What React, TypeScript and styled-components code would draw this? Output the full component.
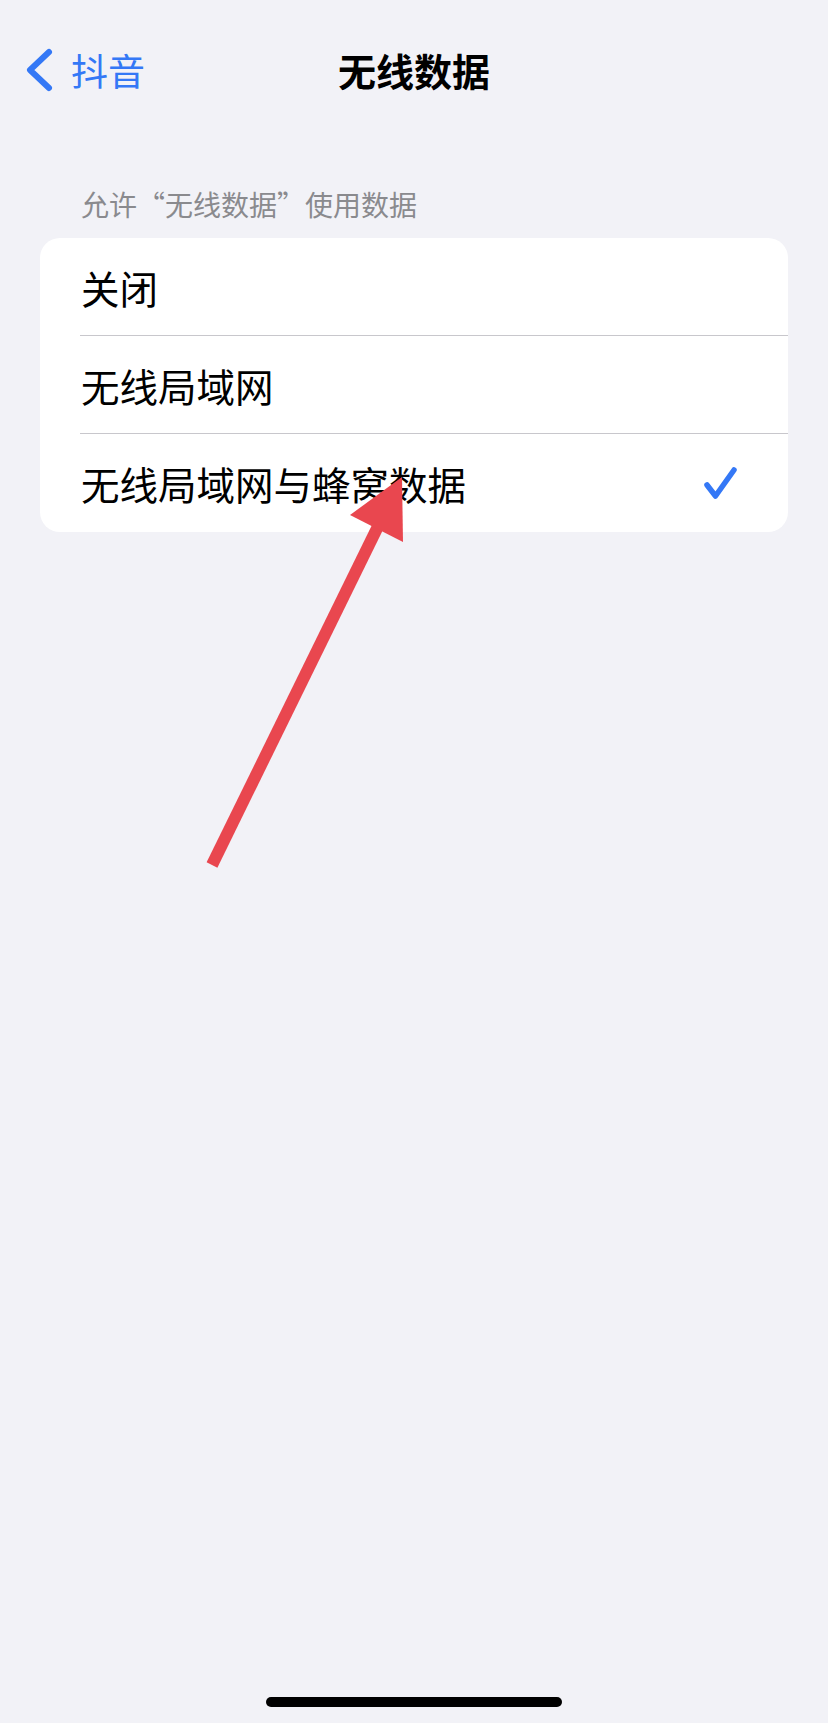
import React from "react";
import styled, { createGlobalStyle } from "styled-components";

const GlobalStyle = createGlobalStyle`
  html, body {
    margin: 0;
    padding: 0;
    background: #f2f2f7;
  }
  body {
    font-family: "Noto Sans CJK SC", "Noto Sans", sans-serif;
    -webkit-font-smoothing: antialiased;
  }
`;

type Option = {
  label: string;
};

const options: Option[] = [
  { label: "关闭" },
  { label: "无线局域网" },
  { label: "无线局域网与蜂窝数据" },
];

export default function App() {
  // 当前选中项
  const selected = 2;

  return (
    <>
      <GlobalStyle />
      <Page>
        <NavBar>
          <BackButton>
            <svg width="32" height="48" viewBox="0 0 32 48">
              <path
                d="M25 6 L6 24 L25 42"
                fill="none"
                stroke="#3478f6"
                strokeWidth="6"
                strokeLinecap="round"
                strokeLinejoin="round"
              />
            </svg>
            <BackLabel>抖音</BackLabel>
          </BackButton>
          <Title>无线数据</Title>
          <span />
        </NavBar>

        <Section>
          <SectionHeader>允许“无线数据”使用数据</SectionHeader>
          <Card>
            {options.map((option, index) => (
              <Row key={option.label} $last={index === options.length - 1}>
                <RowLabel>{option.label}</RowLabel>
                {index === selected && (
                  <svg width="36" height="36" viewBox="0 0 36 36">
                    <path
                      d="M5 20 L13.5 31 L32 5"
                      fill="none"
                      stroke="#3478f6"
                      strokeWidth="5.5"
                      strokeLinecap="round"
                      strokeLinejoin="round"
                    />
                  </svg>
                )}
              </Row>
            ))}
          </Card>
        </Section>

        <Footer>
          <HomeIndicator />
        </Footer>

        {/* 标注箭头 */}
        <Annotation viewBox="0 0 828 1723">
          <line
            x1="212"
            y1="865"
            x2="386"
            y2="510"
            stroke="#e9474f"
            strokeWidth="12"
          />
          <polygon points="402,477 350,515 403,542" fill="#e9474f" />
        </Annotation>
      </Page>
    </>
  );
}

const Page = styled.div`
  position: relative;
  display: flex;
  flex-direction: column;
  width: 828px;
  min-height: 1723px;
  background: #f2f2f7;
  overflow: hidden;
`;

const NavBar = styled.div`
  display: grid;
  grid-template-columns: 1fr auto 1fr;
  align-items: center;
  height: 140px;
  padding: 0 24px;
  box-sizing: border-box;
`;

const BackButton = styled.div`
  display: flex;
  align-items: center;
  gap: 15px;
  color: #3478f6;

  > svg {
    display: block;
  }
`;

const BackLabel = styled.span`
  font-size: 37px;
  line-height: 44px;
`;

const Title = styled.div`
  font-size: 38px;
  line-height: 44px;
  font-weight: 700;
  color: #000;
`;

const Section = styled.div`
  margin: 0 40px;
`;

const SectionHeader = styled.div`
  padding: 47px 0 17px 41px;
  font-size: 28px;
  line-height: 34px;
  color: #8a8a8e;
`;

const Card = styled.div`
  background: #fff;
  border-radius: 20px;
  overflow: hidden;
`;

const Row = styled.div<{ $last: boolean }>`
  display: flex;
  align-items: center;
  justify-content: space-between;
  height: 98px;
  margin-left: 40px;
  padding: 0 50px 0 1px;
  box-sizing: border-box;
  border-bottom: ${(p) => (p.$last ? "none" : "1px solid #c8c7cc")};

  > svg {
    display: block;
  }
`;

const RowLabel = styled.span`
  font-size: 38.5px;
  line-height: 44px;
  color: #000;
`;

const Footer = styled.div`
  margin-top: auto;
  display: flex;
  justify-content: center;
  padding-bottom: 16px;
`;

const HomeIndicator = styled.div`
  width: 296px;
  height: 10px;
  border-radius: 5px;
  background: #000;
`;

const Annotation = styled.svg`
  position: absolute;
  top: 0;
  left: 0;
  width: 828px;
  height: 1723px;
  pointer-events: none;
`;
